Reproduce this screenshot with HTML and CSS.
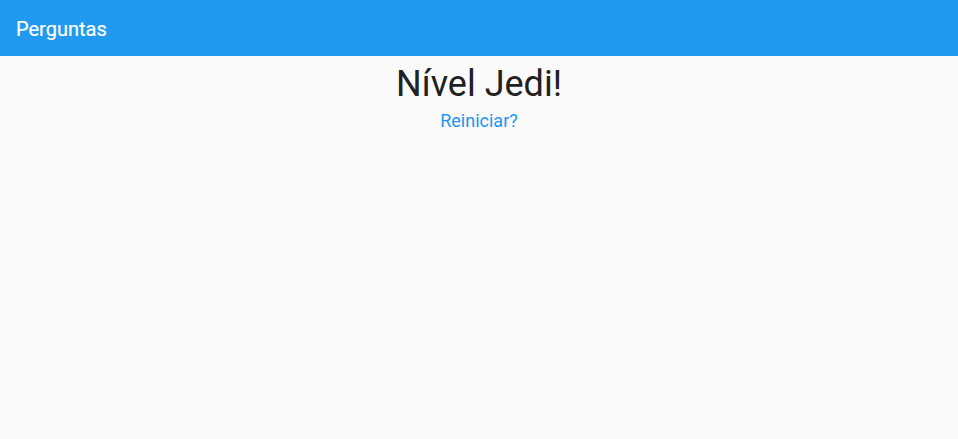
FILE: index.html
```html
<!DOCTYPE html>
<html lang="pt">
<head>
<meta charset="utf-8">
<title>Perguntas</title>
<link rel="stylesheet" href="styles.css">
</head>
<body>
<header class="appbar"><h1 class="title">Perguntas</h1></header>
<main class="content">
  <div class="result">Nível Jedi!</div>
  <button class="restart" type="button">Reiniciar?</button>
</main>
</body>
</html>
```
FILE: styles.css
```css
html, body {
  margin: 0;
  padding: 0;
  height: 100%;
}
body {
  background: #fafafa;
  font-family: Roboto, "Noto Sans", sans-serif;
}
.appbar {
  height: 56px;
  box-sizing: border-box;
  background: #2099ef;
  display: flex;
  align-items: center;
  padding: 2px 16px 0;
}
.title {
  margin: 0;
  font-size: 20px;
  font-weight: 400;
  color: #fff;
  line-height: 1;
  -webkit-text-stroke: 0.2px #fff;
}
.content {
  display: flex;
  flex-direction: column;
  align-items: center;
}
.result {
  font-size: 36px;
  line-height: 56px;
  color: #212121;
}
.restart {
  border: 0;
  background: none;
  font-family: inherit;
  font-size: 18px;
  line-height: 17px;
  color: #2196f3;
  padding: 0 8px;
  cursor: pointer;
}
```
